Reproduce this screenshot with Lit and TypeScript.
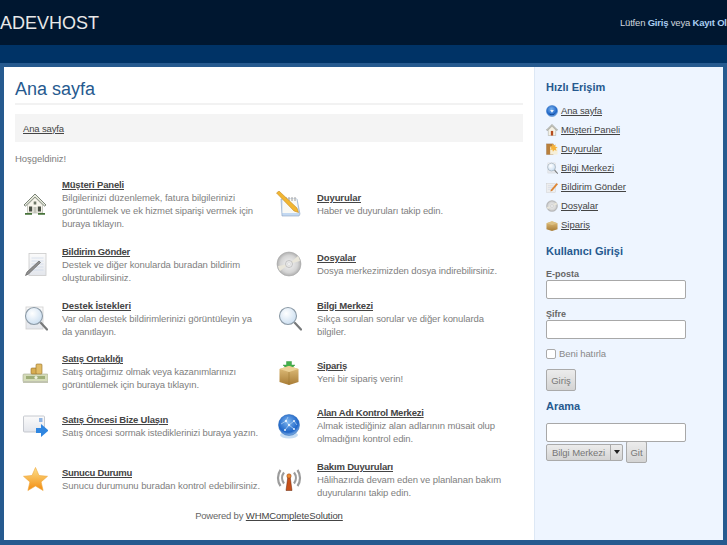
import { LitElement, html, svg, css } from 'lit';
import { customElement } from 'lit/decorators.js';

// shared gradients, referenced by every icon below
const defs = html`
  <svg width="0" height="0" class="defs">
    <defs>
      <linearGradient id="paper" x1="0" y1="0" x2="0" y2="1">
        <stop offset="0" stop-color="#fbfbfb" /><stop offset="1" stop-color="#e3e6ec" />
      </linearGradient>
      <linearGradient id="star" x1="0" y1="0" x2="0" y2="1">
        <stop offset="0" stop-color="#fde08a" /><stop offset="1" stop-color="#f28c10" />
      </linearGradient>
      <linearGradient id="box" x1="0" y1="0" x2="0" y2="1">
        <stop offset="0" stop-color="#e3c27f" /><stop offset="1" stop-color="#a87c35" />
      </linearGradient>
      <radialGradient id="globe" cx="0.45" cy="0.35" r="0.7">
        <stop offset="0" stop-color="#7db4ee" /><stop offset="0.7" stop-color="#1f66c8" /><stop offset="1" stop-color="#a9cdf0" />
      </radialGradient>
      <radialGradient id="disc" cx="0.5" cy="0.5" r="0.55">
        <stop offset="0" stop-color="#f4f4f4" /><stop offset="0.65" stop-color="#d4d4d4" /><stop offset="1" stop-color="#a2a2a2" />
      </radialGradient>
      <radialGradient id="lens" cx="0.4" cy="0.35" r="0.7">
        <stop offset="0" stop-color="#ffffff" /><stop offset="1" stop-color="#c9ddf0" />
      </radialGradient>
    </defs>
  </svg>
`;

const house = svg`
  <path d="M2 14 13 3l11 11-1.500 1L13 6 3.500 15z" fill="#e9ecdf" stroke="#5c6658" stroke-width=".8" />
  <path d="M5.500 14 13 6.500l7.500 7.500v8h-15z" fill="#f7f5ec" stroke="#9a9e90" stroke-width=".5" />
  <rect x="7" y="15.500" width="3.200" height="5" fill="#4a4f45" />
  <rect x="15.800" y="15.500" width="3.200" height="5" fill="#4a4f45" />
  <rect x="11.700" y="10.500" width="2.600" height="3" fill="#6c7565" />
  <rect x="11.500" y="16" width="3" height="6" fill="#c5c6bc" />
  <path d="M3 22h7v1.800H3zM16 22h7v1.800h-7z" fill="#47733a" />`;

const note = svg`
  <rect x="7" y="2.500" width="17" height="22" fill="url(#paper)" stroke="#cacaca" stroke-width=".8" />
  <path d="M9.500 7h12M9.500 10h12M9.500 13h12M9.500 16h12M9.500 19h12" stroke="#ccd7ea" stroke-width=".7" />
  <path d="M3.500 24.500 5 21 17 10l1.500 1.500L6.500 23z" fill="#8f8f8f" stroke="#555" stroke-width=".6" />`;

const search = svg`
  <path d="M19 18 25 24.500" stroke="#77797a" stroke-width="2.200" stroke-linecap="round" />
  <circle cx="12" cy="11" r="8.500" fill="url(#lens)" stroke="#8c9aa6" stroke-width="1.100" />`;

const searchDoc = svg`
  <rect x="4" y="2" width="17" height="22" fill="url(#paper)" stroke="#cfcfcf" stroke-width=".8" />
  ${search}`;

const money = svg`
  <rect x="1" y="15" width="25" height="8" rx="1" fill="#d5dcb9" stroke="#a5aa90" stroke-width=".6" />
  <rect x="4" y="17" width="19" height="3" fill="#9fae78" />
  <circle cx="14" cy="18.500" r="1.600" fill="#eef0dd" />
  <path d="M1 22h25v2H1z" fill="#c1c4b0" />
  <rect x="9" y="9" width="6" height="6" rx="1" fill="#d7ad52" stroke="#94702a" stroke-width=".6" />
  <rect x="14" y="5" width="6" height="10" rx="1" fill="#e2bc66" stroke="#94702a" stroke-width=".6" />`;

const mailForward = svg`
  <rect x="1.500" y="3" width="21" height="16" rx="1" fill="url(#paper)" stroke="#b9bcc4" stroke-width=".8" />
  <rect x="17" y="5" width="3.500" height="4" fill="#8fb4e3" />
  <path d="M14 15h5v-4l7.500 6.500L19 24v-4h-5z" fill="#2f86e0" />`;

const star = svg`
  <path d="M13.500 1.500 17 9.500l8.500.8-6.400 5.600 2 8.600-7.600-4.500-7.600 4.500 2-8.600L1.500 10.300 10 9.500z" fill="url(#star)" stroke="#eea63a" stroke-width=".6" stroke-linejoin="round" />`;

const pencil = svg`
  <path d="M5 8h16l3 15-1 2H6z" fill="#c3d9f2" stroke="#8ba3bf" stroke-width=".6" />
  <path d="M6.500 8h14l2 14H6.500z" fill="#f9f9f5" />
  <path d="M10 6v4M13 6v4M16 6v4M19 6v4" stroke="#888" stroke-width=".8" />
  <path d="M.500 2 3 0 21 17l1.500 4.500-4.500-1.500z" fill="#f2b632" stroke="#b97f16" stroke-width=".5" />`;

const disc = svg`
  <circle cx="13" cy="13" r="12" fill="url(#disc)" stroke="#a7a7a7" stroke-width=".6" />
  <path d="M13 13 4 20a12 12 0 0 1-2-5zM13 13l9-8a12 12 0 0 1 2 5z" fill="#e9e6da" />
  <circle cx="13" cy="13" r="3.500" fill="#e8e8e8" stroke="#a9a9a9" stroke-width=".6" />
  <circle cx="13" cy="13" r="1.300" fill="#fff" stroke="#bcbcbc" stroke-width=".4" />`;

const parcel = svg`
  <path d="M10.500 6V2.500h5V6H19l-6 6-6-6z" fill="#43b04a" stroke="#2d8a35" stroke-width=".4" />
  <path d="M3.500 10 13 7l9.500 3v13L13 26l-9.500-3z" fill="url(#box)" />
  <path d="M3.500 10 13 13l9.500-3L13 7z" fill="#ecd196" />
  <path d="M13 13v13" stroke="#96702f" stroke-width=".5" />`;

const globe = svg`
  <ellipse cx="13" cy="22" rx="9" ry="3.500" fill="#c5dcf2" />
  <circle cx="13" cy="12" r="10.500" fill="url(#globe)" stroke="#1c5fb3" stroke-width=".5" />
  <path d="M5 11l5-3 3 4 5-4 3 4M10 8l2-4M13 12l-4 5M13 12l5 4" stroke="#bcd8f5" stroke-width=".7" fill="none" />
  <circle cx="10" cy="8" r="1.200" fill="#e6f1fc" /><circle cx="13" cy="12" r="1.200" fill="#e6f1fc" />
  <circle cx="18" cy="8" r="1" fill="#e6f1fc" /><circle cx="9" cy="17" r="1" fill="#e6f1fc" /><circle cx="18" cy="16" r="1" fill="#e6f1fc" />`;

const antenna = svg`
  <path d="M8 6.500a9 9 0 0 0 0 11M4.500 4a14 14 0 0 0 0 16M18 6.500a9 9 0 0 1 0 11M21.500 4a14 14 0 0 1 0 16" fill="none" stroke="#9c9c9c" stroke-width="2.200" />
  <path d="M11.800 11h2.400l1.800 13.500h-6z" fill="#c8501a" stroke="#66260c" stroke-width=".5" />
  <circle cx="13" cy="10" r="2.200" fill="#ee8a33" stroke="#8a3c10" stroke-width=".5" />`;

// the smaller versions used in the quick links are not plain scale-downs
const sideGlobe = svg`
  <circle cx="13" cy="13" r="12" fill="url(#globe)" stroke="#2a6cc0" stroke-width="1" />
  <path d="M13 4v7h4l-4 6-4-6h4z" fill="#f2f7fd" />
  <path d="M6 16a8 8 0 0 0 14 0l-3 5H9z" fill="#0f3f85" />`;

const sideHome = svg`
  <path d="M1 13 13 1l12 12-2 1L13 4 3 14z" fill="#d8d8cd" stroke="#6b6b60" stroke-width="1" />
  <path d="M5 13 13 5l8 8v12H5z" fill="#f4f1e5" stroke="#8a8a7c" stroke-width=".8" />
  <rect x="10.500" y="15" width="5" height="10" fill="#b64a1c" />`;

const sideNews = svg`
  <rect x="1" y="2" width="15" height="23" fill="#b9803c" stroke="#85592a" stroke-width=".6" />
  <rect x="9" y="8" width="16" height="17" fill="#f6efd8" />
  <path d="M14 1l2.500 4.500L21 3l-1 5 5 1-4 3 2 5-5-2-3 4-1-5-5 1 3-4-4-3 5-1z" fill="#f6b23a" />`;

const sideCompose = svg`
  <rect x="1" y="5" width="19" height="20" fill="#eeeeee" stroke="#c6c6c6" stroke-width=".8" />
  <path d="M4 10h12M4 14h12M4 18h12" stroke="#c4cfe3" stroke-width="1" />
  <path d="M11 19 23 5l2.500 2L13.500 21 10 22z" fill="#e8862a" stroke="#a85a14" stroke-width=".5" />`;

const sideBox = svg`
  <path d="M1 9 13 5l12 4v13l-12 4-12-4z" fill="url(#box)" />
  <path d="M1 9l12 4 12-4-12-4z" fill="#dcc083" />`;

// text widths of the reference, the glyphs get stretched a little to reach them
const canvas = document.createElement('canvas').getContext('2d')!;
function fit(text: string, width: number, font = '9.5px "Liberation Sans"') {
  canvas.font = font;
  const spacing = (width - canvas.measureText(text).width) / text.length;
  return `letter-spacing:${spacing.toFixed(3)}px`;
}

const BOLD = 'bold 9.5px "Liberation Sans"';

type Line = [string, number];
type Cell = { icon: unknown; title: Line; lines: Line[] };

const rows: [Cell, Cell][] = [
  [
    {
      icon: house,
      title: ['Müşteri Paneli', 62],
      lines: [
        ['Bilgilerinizi düzenlemek, fatura bilgilerinizi', 173],
        ['görüntülemek ve ek hizmet siparişi vermek için', 191],
        ['buraya tıklayın.', 62],
      ],
    },
    { icon: pencil, title: ['Duyurular', 44], lines: [['Haber ve duyuruları takip edin.', 126]] },
  ],
  [
    {
      icon: note,
      title: ['Bildirim Gönder', 68],
      lines: [
        ['Destek ve diğer konularda buradan bildirim', 178],
        ['oluşturabilirsiniz.', 69],
      ],
    },
    { icon: disc, title: ['Dosyalar', 39], lines: [['Dosya merkezimizden dosya indirebilirsiniz.', 180]] },
  ],
  [
    {
      icon: searchDoc,
      title: ['Destek İstekleri', 69],
      lines: [
        ['Var olan destek bildirimlerinizi görüntüleyin ya', 190],
        ['da yanıtlayın.', 54],
      ],
    },
    {
      icon: search,
      title: ['Bilgi Merkezi', 56],
      lines: [
        ['Sıkça sorulan sorular ve diğer konularda', 167],
        ['bilgiler.', 29],
      ],
    },
  ],
  [
    {
      icon: money,
      title: ['Satış Ortaklığı', 61],
      lines: [
        ['Satış ortağımız olmak veya kazanımlarınızı', 174],
        ['görüntülemek için buraya tıklayın.', 137],
      ],
    },
    { icon: parcel, title: ['Sipariş', 30], lines: [['Yeni bir sipariş verin!', 86]] },
  ],
  [
    {
      icon: mailForward,
      title: ['Satış Öncesi Bize Ulaşın', 106],
      lines: [['Satış öncesi sormak istediklerinizi buraya yazın.', 196]],
    },
    {
      icon: globe,
      title: ['Alan Adı Kontrol Merkezi', 107],
      lines: [
        ['Almak istediğiniz alan adlarının müsait olup', 178],
        ['olmadığını kontrol edin.', 96],
      ],
    },
  ],
  [
    {
      icon: star,
      title: ['Sunucu Durumu', 70],
      lines: [['Sunucu durumunu buradan kontrol edebilirsiniz.', 198]],
    },
    {
      icon: antenna,
      title: ['Bakım Duyuruları', 76],
      lines: [
        ['Hâlihazırda devam eden ve planlanan bakım', 184],
        ['duyurularını takip edin.', 94],
      ],
    },
  ],
];

const quickLinks: { icon: unknown; label: Line }[] = [
  { icon: sideGlobe, label: ['Ana sayfa', 41] },
  { icon: sideHome, label: ['Müşteri Paneli', 59] },
  { icon: sideNews, label: ['Duyurular', 41] },
  { icon: searchDoc, label: ['Bilgi Merkezi', 53] },
  { icon: sideCompose, label: ['Bildirim Gönder', 65] },
  { icon: disc, label: ['Dosyalar', 37] },
  { icon: sideBox, label: ['Sipariş', 29] },
];

@customElement('app-root')
export class AppRoot extends LitElement {
  static styles = css`
    :host {
      display: block;
      width: 727px;
      height: 545px;
      overflow: hidden;
      background: #265a8f;
      font-family: 'Liberation Sans', Arial, sans-serif;
      font-size: 9.5px;
      line-height: 13px;
      color: #808080;
    }

    .defs {
      position: absolute;
    }

    a {
      color: #444;
      text-decoration: underline;
    }

    .top {
      height: 45px;
      display: grid;
      grid-template-columns: 620px 1fr;
      align-items: center;
      background: #001730;
      white-space: nowrap;
      overflow: hidden;
    }

    .brand {
      font-size: 18px;
      line-height: 22px;
      color: #e8e8e8;
    }

    .account {
      letter-spacing: -0.2px;
      color: #d0d6de;
    }

    .account b {
      color: #a9cdf0;
    }

    .nav {
      height: 18px;
      background: #003366;
    }

    .page {
      display: flex;
      height: 473px;
      margin: 4px 4px 0;
    }

    .main {
      width: 508px;
      padding: 0 11px;
      background: #fff;
    }

    h1 {
      margin: 0;
      height: 38px;
      padding-top: 9px;
      box-sizing: border-box;
      border-bottom: 2px solid #f2f2f2;
      font-size: 18px;
      font-weight: normal;
      line-height: 27px;
      color: #265a8f;
    }

    .crumb {
      margin-top: 9px;
      height: 28px;
      padding: 0 8px;
      display: flex;
      align-items: center;
      background: #f4f4f4;
    }

    .welcome {
      margin: 10px 0 13px;
    }

    .grid {
      display: grid;
      grid-template-columns: 254px 1fr;
      row-gap: 14.8px;
    }

    .cell {
      display: flex;
      align-items: center;
      white-space: nowrap;
    }

    .cell-icon {
      flex: none;
      width: 26px;
      height: 26px;
      margin-left: 7px;
      margin-right: 14px;
    }

    .cell-right .cell-icon {
      margin-right: 15px;
    }

    .cell-title,
    .cell-line {
      display: block;
      width: max-content;
    }

    .cell-title {
      font-weight: bold;
    }

    .powered {
      margin-top: 10px;
      text-align: center;
      color: #666;
    }

    .side {
      flex: 1;
      padding: 13px 11px 0;
      background: #eef5ff;
      border-left: 1px solid #dde8f5;
    }

    h2 {
      margin: 0;
      font-size: 11px;
      line-height: 14px;
      font-weight: bold;
      color: #265a8f;
    }

    .quick {
      margin: 7px 0 0;
      padding: 0;
      list-style: none;
    }

    .quick li {
      height: 19px;
      display: flex;
      align-items: center;
      gap: 3px;
      white-space: nowrap;
    }

    .quick svg {
      width: 12px;
      height: 12px;
      flex: none;
    }

    .login {
      margin-top: 10px;
    }

    label {
      display: block;
      height: 12px;
      line-height: 12px;
      font-weight: bold;
      font-size: 9px;
      color: #666;
    }

    .field {
      margin-top: 10px;
    }

    .field + .field {
      margin-top: 9px;
    }

    input[type='text'] {
      display: block;
      width: 140px;
      height: 19px;
      margin: 0;
      box-sizing: border-box;
      background: #fff;
      border: 1px solid #a8a8a8;
      border-radius: 2px;
    }

    .remember {
      display: flex;
      align-items: center;
      gap: 3px;
      margin-top: 8px;
      color: #888;
    }

    .box {
      width: 10px;
      height: 10px;
      box-sizing: border-box;
      background: #fff;
      border: 1px solid #aaa;
      border-radius: 2px;
    }

    .btn {
      display: flex;
      align-items: center;
      justify-content: center;
      box-sizing: border-box;
      color: #777;
      background: linear-gradient(#ececec, #d4d4d4);
      border: 1px solid #aaa;
      border-radius: 2px;
    }

    .go {
      width: 30px;
      height: 22px;
      margin-top: 9px;
    }

    .search-title {
      margin-top: 8px;
    }

    input.search-input {
      margin-top: 10px;
    }

    .search-row {
      display: flex;
      align-items: center;
      gap: 3px;
      height: 22px;
      margin-top: -1px;
    }

    .select {
      display: flex;
      width: 77px;
      height: 17px;
      box-sizing: border-box;
      line-height: 15px;
      color: #777;
      background: linear-gradient(#ececec, #d4d4d4);
      border: 1px solid #aaa;
      border-radius: 2px;
    }

    .select span {
      flex: 1;
      text-align: center;
    }

    .arrow {
      width: 11px;
      display: flex;
      align-items: center;
      justify-content: center;
      border-left: 1px solid #aaa;
    }

    .arrow::before {
      content: '';
      border: 3px solid transparent;
      border-top: 4px solid #222;
      border-bottom: 0;
    }

    .git {
      width: 21px;
      height: 22px;
    }
  `;

  private renderCell(cell: Cell, side: string) {
    return html`
      <div class="cell cell-${side}">
        <svg class="cell-icon" viewBox="0 0 26 26">${cell.icon}</svg>
        <div>
          <a class="cell-title" href="#" style=${fit(cell.title[0], cell.title[1], BOLD)}>${cell.title[0]}</a>
          ${cell.lines.map(([text, width]) => html`<span class="cell-line" style=${fit(text, width)}>${text}</span>`)}
        </div>
      </div>
    `;
  }

  render() {
    return html`
      ${defs}
      <div class="top">
        <div class="brand">ADEVHOST</div>
        <div class="account">Lütfen <b>Giriş</b> veya <b>Kayıt Ol</b></div>
      </div>
      <div class="nav"></div>
      <div class="page">
        <div class="main">
          <h1>Ana sayfa</h1>
          <div class="crumb"><a href="#" style=${fit('Ana sayfa', 41)}>Ana sayfa</a></div>
          <p class="welcome" style=${fit('Hoşgeldiniz!', 51)}>Hoşgeldiniz!</p>
          <div class="grid">
            ${rows.map(
              ([left, right]) => html`${this.renderCell(left, 'left')}${this.renderCell(right, 'right')}`
            )}
          </div>
          <div class="powered">
            <span style=${fit('Powered by', 48)}>Powered by</span>
            <a href="#" style=${fit('WHMCompleteSolution', 97)}>WHMCompleteSolution</a>
          </div>
        </div>
        <div class="side">
          <h2>Hızlı Erişim</h2>
          <ul class="quick">
            ${quickLinks.map(
              (link) => html`
                <li>
                  <svg viewBox="0 0 26 26">${link.icon}</svg>
                  <a href="#" style=${fit(link.label[0], link.label[1])}>${link.label[0]}</a>
                </li>
              `
            )}
          </ul>
          <div class="login">
            <h2>Kullanıcı Girişi</h2>
            <div class="field"><label>E-posta</label><input type="text" /></div>
            <div class="field"><label>Şifre</label><input type="text" /></div>
            <div class="remember"><span class="box"></span><span style=${fit('Beni hatırla', 47)}>Beni hatırla</span></div>
            <div class="btn go">Giriş</div>
          </div>
          <h2 class="search-title">Arama</h2>
          <input class="search-input" type="text" />
          <div class="search-row">
            <div class="select"><span style=${fit('Bilgi Merkezi', 53)}>Bilgi Merkezi</span><i class="arrow"></i></div>
            <div class="btn git">Git</div>
          </div>
        </div>
      </div>
    `;
  }
}
